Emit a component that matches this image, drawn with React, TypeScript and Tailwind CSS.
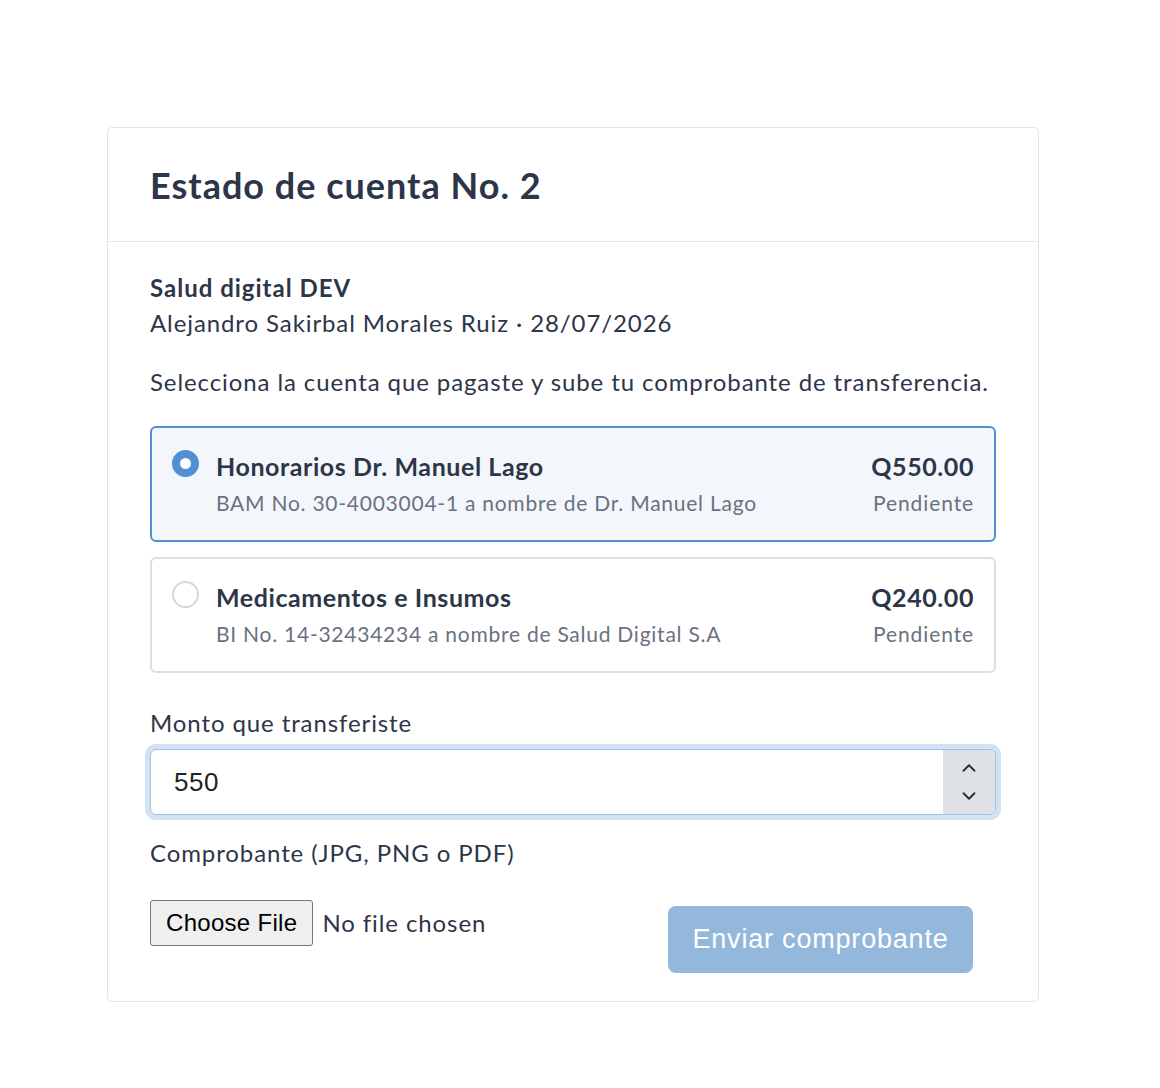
import { ChevronUp, ChevronDown } from "lucide-react";

const accounts = [
  {
    name: "Honorarios Dr. Manuel Lago",
    bank: "BAM No. 30-4003004-1 a nombre de Dr. Manuel Lago",
    amount: "Q550.00",
    status: "Pendiente",
    selected: true,
  },
  {
    name: "Medicamentos e Insumos",
    bank: "BI No. 14-32434234 a nombre de Salud Digital S.A",
    amount: "Q240.00",
    status: "Pendiente",
    selected: false,
  },
];

function AccountOption({ a }: { a: (typeof accounts)[number] }) {
  return (
    <label
      className={
        a.selected
          ? "flex items-start rounded-[6px] border-2 border-[#4f8fd2] bg-[#f3f7fb] px-[20px] py-[22px]"
          : "flex items-start rounded-[6px] border-2 border-[#dedfe1] bg-white px-[20px] py-[22px]"
      }
    >
      {a.selected ? (
        <span className="size-[27px] shrink-0 rounded-full border-[8px] border-[#4f8fd2] bg-white" />
      ) : (
        <span className="size-[27px] shrink-0 rounded-full border-2 border-[#d4d6d9] bg-white" />
      )}
      <div className="ml-[17px] flex-1">
        <div className="text-[25px] font-bold leading-[32px] tracking-[0.58px] text-[#2d3648]">{a.name}</div>
        <div className="mt-[6px] text-[21px] leading-[30px] tracking-[0.75px] text-[#6a7180]">{a.bank}</div>
      </div>
      <div className="text-right">
        <div className="text-[25px] font-bold leading-[32px] tracking-[0.58px] text-[#2d3648]">{a.amount}</div>
        <div className="mt-[6px] text-[21px] leading-[30px] tracking-[0.9px] text-[#6a7180]">{a.status}</div>
      </div>
    </label>
  );
}

export default function App() {
  return (
    <div className="min-h-[1088px] bg-white pt-[127px] font-['Lato','Noto_Sans',sans-serif] text-[#2d3648]">
      <div className="ml-[107px] w-[932px] rounded-[5px] border border-[#e3e5ea] bg-white">
        <div className="border-b border-[#e6e8ed] px-[42px] pb-[34px] pt-[35px]">
          <h1 className="text-[36px] font-bold leading-[44px] tracking-[1px] text-[#2d3648]">Estado de cuenta No. 2</h1>
        </div>

        <div className="px-[42px] pb-[28px] pt-[28px] tracking-[0.9px]">
          <div className="text-[24px] font-bold leading-[35px] tracking-[1px]">Salud digital DEV</div>
          <div className="text-[24px] leading-[35px]">Alejandro Sakirbal Morales Ruiz · 28/07/2026</div>

          <p className="mt-[24px] text-[24px] leading-[35px]">
            Selecciona la cuenta que pagaste y sube tu comprobante de transferencia.
          </p>

          <div className="mt-[27px] flex flex-col gap-[15px]">
            {accounts.map((a) => (
              <AccountOption key={a.name} a={a} />
            ))}
          </div>

          <div className="mt-[32px] text-[24px] leading-[35px]">Monto que transferiste</div>
          <div className="mt-[9px] flex h-[66px] overflow-hidden rounded-[6px] border border-[#9fc1e4] bg-white shadow-[0_0_0_5px_#d0e2f3]">
            <input
              type="text"
              defaultValue="550"
              className="min-w-0 flex-1 bg-transparent px-[23px] font-['Liberation_Sans',Arial,sans-serif] text-[26px] tracking-[0.5px] text-[#222] outline-none"
            />
            <div className="flex w-[52px] flex-col items-center justify-center gap-[6px] bg-[#dee2e6] text-[#2b2b2b]">
              <ChevronUp className="size-[22px]" strokeWidth={2} />
              <ChevronDown className="size-[22px]" strokeWidth={2} />
            </div>
          </div>

          <div className="mt-[20px] text-[24px] leading-[35px]">Comprobante (JPG, PNG o PDF)</div>

          <div className="mt-[30px] flex items-start justify-between">
            <div className="flex items-center">
              <span className="flex h-[46px] items-center rounded-[3px] border border-[#767676] bg-[#efefef] px-[15px] font-['Liberation_Sans',Arial,sans-serif] text-[24px] tracking-[0.3px] text-black">
                Choose File
              </span>
              <span className="ml-[9px] text-[24px]">No file chosen</span>
            </div>
            <button
              type="button"
              disabled
              className="mr-[23px] mt-[6px] h-[67px] w-[305px] rounded-[8px] bg-[#93b8dc] font-['Liberation_Sans',Arial,sans-serif] text-[27px] tracking-[0.8px] text-white"
            >
              Enviar comprobante
            </button>
          </div>
        </div>
      </div>
    </div>
  );
}
